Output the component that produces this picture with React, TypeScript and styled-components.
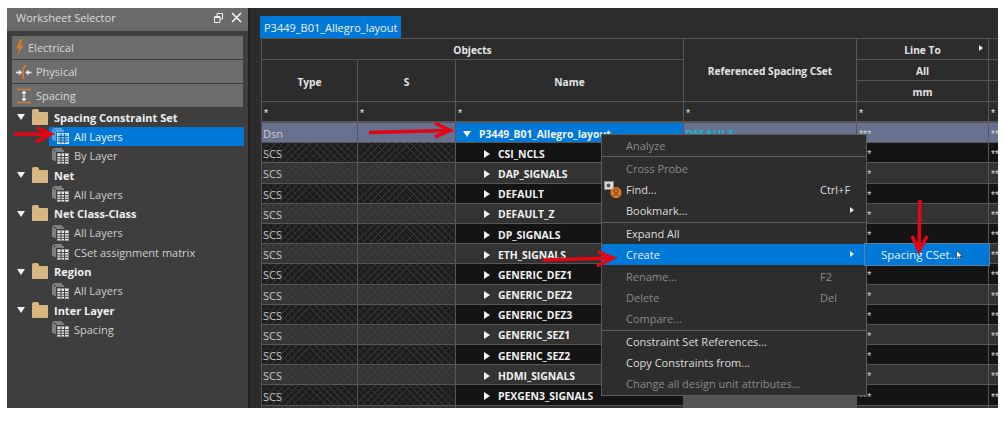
import React from 'react';
import styled, { createGlobalStyle, css } from 'styled-components';

const Global = createGlobalStyle`
    html, body { margin: 0; padding: 0; background: #fff; }
    #root { width: 1004px; height: 424px; overflow: hidden; }
`;

const FONT = '"Open Sans", "Noto Sans", "Liberation Sans", sans-serif';

const Page = styled.div`
    position: relative;
    width: 1004px;
    height: 424px;
    box-sizing: border-box;
    padding: 8px 6px 16px 7px;
    background: #fff;
    display: flex;
    font-family: ${FONT};
    font-size: 11px;
    color: #e6e6e6;
`;

/* sidebar */
const Sidebar = styled.aside`
    width: 243px;
    box-sizing: border-box;
    flex: none;
    display: flex;
    flex-direction: column;
    background: #3e3e3e;
    border-right: 2px solid #222;
`;
const TitleBar = styled.div`
    height: 23px;
    flex: none;
    background: #6a6a6a;
    display: flex;
    align-items: center;
    padding: 0 6px 0 9px;
    color: #dcdcdc;
    font-size: 11px;
    gap: 8px;
    border-bottom: 1px solid #3a3a3a;
`;
const TitleText = styled.span`
    flex: 1;
    margin-top: -5px;
`;
const TitleButton = styled.span`
    display: flex;
    margin-top: -4px;
    color: #f0f0f0;
`;
const Accordion = styled.div`
    display: flex;
    flex-direction: column;
    gap: 1px;
    padding: 4px 5px 0 5px;
`;
const AccordionButton = styled.div`
    height: 23px;
    background: #6c6c6c;
    display: flex;
    align-items: center;
    gap: 4px;
    padding-left: 4px;
    color: #d8d8d8;
    font-size: 11px;
`;
const Tree = styled.div`
    flex: 1;
    padding: 0.5px 4px 0 5px;
    display: flex;
    flex-direction: column;
    background: #3e3e3e;
`;
const GroupRow = styled.div`
    height: 19.3px;
    display: flex;
    align-items: center;
    font-weight: 700;
    font-size: 11px;
    color: #f0f0f0;
    padding-left: 5px;
`;
const DownTriangle = styled.span`
    width: 0;
    height: 0;
    flex: none;
    border-left: 4.5px solid transparent;
    border-right: 4.5px solid transparent;
    border-top: 6px solid #f2f2f2;
    margin-right: 7px;
`;
const Folder = styled.span`
    position: relative;
    width: 16px;
    height: 13px;
    flex: none;
    margin: 2px 6px 0 0;
    border-radius: 1px;
    background: #d9b680;
    &::before {
        content: '';
        position: absolute;
        left: 0;
        top: -3px;
        width: 7px;
        height: 3px;
        border-radius: 2px 2px 0 0;
        background: #d9b680;
    }
`;
const LeafRow = styled.div<{ $selected?: boolean }>`
    height: 19.3px;
    margin-left: 37px;
    display: flex;
    align-items: center;
    gap: 5px;
    padding-left: 3px;
    color: #cfcfcf;
    font-size: 11px;
    ${p => p.$selected && css`
        background: #0078d7;
        color: #f4f4f4;
    `}
`;

/* main area */
const Main = styled.main`
    flex: 1;
    min-width: 0;
    background: #2c2c2c;
    padding: 8px 0 0 10px;
    overflow: hidden;
    display: flex;
    flex-direction: column;
`;
const Tab = styled.div`
    align-self: flex-start;
    height: 22px;
    box-sizing: border-box;
    padding: 0 4px;
    line-height: 23px;
    background: #0078d7;
    color: #f0f0f0;
    font-size: 11px;
`;
const Grid = styled.div`
    display: grid;
    grid-template-columns: 96px 98px 228px 173px 132px 20px;
    grid-template-rows: 21px 21px 21px 21px;
    grid-auto-rows: 20.2px;
    margin-left: 1px;
    border-top: 1px solid #565656;
    border-left: 1px solid #565656;
    width: 760px;
`;
const Cell = styled.div`
    box-sizing: border-box;
    border-right: 1px solid #565656;
    border-bottom: 1px solid #565656;
    display: flex;
    align-items: center;
    white-space: nowrap;
    overflow: hidden;
    padding: 2px 0 0 1px;
    color: #c8c8c8;
    font-size: 11px;
`;
const HeadCell = styled(Cell)<{ $col: string; $row: string }>`
    grid-column: ${p => p.$col};
    grid-row: ${p => p.$row};
    justify-content: center;
    font-weight: 700;
    color: #e4e4e4;
    font-size: 10.2px;
    padding: 2px 0 0;
    position: relative;
`;
const FilterCell = styled(Cell)`
    color: #e8e8e8;
    font-family: "Liberation Sans", sans-serif;
    font-size: 10.5px;
    border-bottom-width: 2px;
    padding: 3px 0 0 2px;
`;
const hatch = (base: string, line: string) => css`
    background-color: ${base};
    background-image:
        repeating-linear-gradient(45deg, ${line} 0 1px, transparent 1px 5px),
        repeating-linear-gradient(-45deg, ${line} 0 1px, transparent 1px 5px);
`;
const TypeCell = styled(Cell)<{ $dark: boolean; $current: boolean }>`
    ${p => p.$current
        ? css`background: #68708f;`
        : p.$dark ? hatch('#1c1c1c', '#303030') : hatch('#333333', '#3b3b3b')}
`;
const NameCell = styled(Cell)<{ $dark: boolean; $current: boolean }>`
    background: ${p => (p.$current ? '#0078d7' : p.$dark ? '#141414' : '#333333')};
    font-weight: 700;
    font-size: 10.4px;
    color: #f2f2f2;
    padding-left: ${p => (p.$current ? '7px' : '28px')};
    gap: 8px;
`;
const RefCell = styled(Cell)<{ $current: boolean }>`
    background: ${p => (p.$current ? '#68708f' : '#555555')};
    color: #16b4d4;
    font-weight: 700;
`;
const ValueCell = styled(Cell)<{ $dark: boolean; $current: boolean }>`
    background: ${p => (p.$current ? '#68708f' : p.$dark ? '#141414' : '#333333')};
    color: #d0d0d0;
    font-family: "Liberation Sans", sans-serif;
    font-size: 10.5px;
    padding: 3px 0 0 2px;
`;
const RightTriangle = styled.span`
    width: 0;
    height: 0;
    flex: none;
    border-top: 4.5px solid transparent;
    border-bottom: 4.5px solid transparent;
    border-left: 6px solid #f2f2f2;
`;
const RowDown = styled(DownTriangle)`
    margin-right: 0;
`;
const HeadArrow = styled.span`
    position: absolute;
    right: 5px;
    top: 6px;
    width: 0;
    height: 0;
    border-top: 3px solid transparent;
    border-bottom: 3px solid transparent;
    border-left: 4px solid #e8e8e8;
`;

/* context menu */
const Menu = styled.div`
    position: absolute;
    left: 601px;
    top: 134px;
    width: 266px;
    box-sizing: border-box;
    background: #2d2d2d;
    border: 1px solid #5c5c5c;
    font-size: 11px;
`;
const MenuItem = styled.div<{ $disabled?: boolean; $active?: boolean }>`
    position: relative;
    height: 21.4px;
    display: flex;
    align-items: center;
    padding-left: 24px;
    color: ${p => (p.$disabled ? '#8a8a8a' : '#dedede')};
    ${p => p.$active && css`background: #0078d7; color: #e8f2fb;`}
`;
const MenuSep = styled.div`
    height: 1px;
    background: #5c5c5c;
`;
const Shortcut = styled.span`
    position: absolute;
    left: 218px;
`;
const MenuArrow = styled.span`
    position: absolute;
    right: 12px;
    top: 7px;
    width: 0;
    height: 0;
    border-top: 3.5px solid transparent;
    border-bottom: 3.5px solid transparent;
    border-left: 4px solid #e8e8e8;
`;
const Submenu = styled.div`
    position: absolute;
    left: 262px;
    top: -1px;
    width: 126px;
    height: 23px;
    box-sizing: border-box;
    background: #0078d7;
    border: 1px solid #5c7f9f;
    display: flex;
    align-items: center;
    padding-left: 16px;
    font-size: 11.5px;
    color: #e8f2fb;
`;
const FindIcon = styled.svg`
    position: absolute;
    left: 2px;
    top: 2px;
`;
const Cursor = styled.svg`
    position: absolute;
    left: 91px;
    top: 6px;
`;
const Arrow = styled.svg`
    position: absolute;
    left: 0;
    top: 0;
    pointer-events: none;
`;

const SheetIcon = ({ selected }: { selected?: boolean }) => (
    <svg width="17" height="16" viewBox="0 0 17 16">
        <path
            d="M1 12V2.5Q1 1 2.5 1H10M3 13V4.5Q3 3 4.5 3H12"
            fill="none"
            stroke={selected ? '#a9d2f3' : '#c4c4c4'}
            strokeWidth="1"
        />
        <rect x="5.5" y="5.5" width="11" height="10" fill={selected ? '#8cc4f0' : '#e8e8e8'} stroke={selected ? '#d6ebfb' : '#9a9a9a'} />
        <path
            d="M5.5 8.5H16.5M5.5 11H16.5M5.5 13.3H16.5M9 5.5V15.5M12.5 5.5V15.5"
            stroke={selected ? '#1668ad' : '#444'}
            strokeWidth="1"
        />
    </svg>
);

const BoltIcon = () => (
    <svg width="8" height="18" viewBox="0 0 8 18">
        <path d="M4.5 0L0 9.5H3.5L1 17L7.5 6.5H4.5L6.5 0Z" fill="#d97a28" />
    </svg>
);
const PhysicalIcon = () => (
    <svg width="16" height="16" viewBox="0 0 16 16">
        <path d="M0 8.5H4.5M3 6.5L5 8.5L3 10.5M15.5 8.5H10.5M12.5 6.5L10.5 8.5L12.5 10.5" stroke="#eee" strokeWidth="1.4" fill="none" />
        <path d="M7 15V7Q7 2 10.5 2" stroke="#d97a28" strokeWidth="1.8" fill="none" />
    </svg>
);
const SpacingIcon = () => (
    <svg width="16" height="16" viewBox="0 0 16 16">
        <path d="M1 1.5H15M1 14.5H15" stroke="#d97a28" strokeWidth="1.4" />
        <path d="M8 3.5V12.5M6 5.5L8 3.5L10 5.5M6 10.5L8 12.5L10 10.5" stroke="#eee" strokeWidth="1.3" fill="none" />
    </svg>
);

const treeData: { group: string; leaves: string[] }[] = [
    { group: 'Spacing Constraint Set', leaves: ['All Layers', 'By Layer'] },
    { group: 'Net', leaves: ['All Layers'] },
    { group: 'Net Class-Class', leaves: ['All Layers', 'CSet assignment matrix'] },
    { group: 'Region', leaves: ['All Layers'] },
    { group: 'Inter Layer', leaves: ['Spacing'] },
];

const rowNames = [
    'CSI_NCLS', 'DAP_SIGNALS', 'DEFAULT', 'DEFAULT_Z', 'DP_SIGNALS', 'ETH_SIGNALS',
    'GENERIC_DEZ1', 'GENERIC_DEZ2', 'GENERIC_DEZ3', 'GENERIC_SEZ1', 'GENERIC_SEZ2',
    'HDMI_SIGNALS', 'PEXGEN3_SIGNALS', '',
];

const App = () => {
    return (
        <Page>
            <Global />
            <Sidebar>
                <TitleBar>
                    <TitleText>Worksheet Selector</TitleText>
                    <TitleButton>
                        <svg width="9" height="10" viewBox="0 0 9 10">
                            <path d="M3 3V.5H8.5V6H6M.5 3.5H6V9.5H.5ZM.5 4.5H6" fill="none" stroke="#f0f0f0" />
                        </svg>
                    </TitleButton>
                    <TitleButton>
                        <svg width="11" height="11" viewBox="0 0 11 11">
                            <path d="M1 1L10 10M10 1L1 10" stroke="#f4f4f4" strokeWidth="1.6" />
                        </svg>
                    </TitleButton>
                </TitleBar>
                <Accordion>
                    <AccordionButton><BoltIcon />Electrical</AccordionButton>
                    <AccordionButton><PhysicalIcon />Physical</AccordionButton>
                    <AccordionButton><SpacingIcon />Spacing</AccordionButton>
                </Accordion>
                <Tree>
                    {treeData.map((g, gi) => (
                        <React.Fragment key={gi}>
                            <GroupRow>
                                <DownTriangle />
                                <Folder />
                                {g.group}
                            </GroupRow>
                            {g.leaves.map((leaf, li) => (
                                <LeafRow key={li} $selected={gi === 0 && li === 0}>
                                    <SheetIcon selected={gi === 0 && li === 0} />
                                    {leaf}
                                </LeafRow>
                            ))}
                        </React.Fragment>
                    ))}
                </Tree>
            </Sidebar>

            <Main>
                <Tab>P3449_B01_Allegro_layout</Tab>
                <Grid>
                    <HeadCell $col="1 / 4" $row="1">Objects</HeadCell>
                    <HeadCell $col="1" $row="2 / 4">Type</HeadCell>
                    <HeadCell $col="2" $row="2 / 4">S</HeadCell>
                    <HeadCell $col="3" $row="2 / 4">Name</HeadCell>
                    <HeadCell $col="4" $row="1 / 4">Referenced Spacing CSet</HeadCell>
                    <HeadCell $col="5" $row="1">Line To<HeadArrow /></HeadCell>
                    <HeadCell $col="5" $row="2">All</HeadCell>
                    <HeadCell $col="5" $row="3">mm</HeadCell>
                    <HeadCell $col="6" $row="1" />
                    <HeadCell $col="6" $row="2" />
                    <HeadCell $col="6" $row="3" />
                    {['*', '*', '*', '*', '*', '*'].map((s, i) => (
                        <FilterCell key={i}>{s}</FilterCell>
                    ))}

                    <TypeCell $dark={false} $current>Dsn</TypeCell>
                    <TypeCell $dark={false} $current />
                    <NameCell $dark={false} $current><RowDown />P3449_B01_Allegro_layout</NameCell>
                    <RefCell $current>DEFAULT</RefCell>
                    <ValueCell $dark={false} $current>***</ValueCell>
                    <ValueCell $dark={false} $current>***</ValueCell>

                    {rowNames.map((name, i) => {
                        const dark = i % 2 === 0;
                        return (
                            <React.Fragment key={i}>
                                <TypeCell $dark={dark} $current={false}>{name && 'SCS'}</TypeCell>
                                <TypeCell $dark={dark} $current={false} />
                                <NameCell $dark={dark} $current={false}>
                                    {name && <RightTriangle />}
                                    {name}
                                </NameCell>
                                <RefCell $current={false} />
                                <ValueCell $dark={dark} $current={false}>***</ValueCell>
                                <ValueCell $dark={dark} $current={false}>***</ValueCell>
                            </React.Fragment>
                        );
                    })}
                </Grid>
            </Main>

            <Menu>
                <MenuItem $disabled>Analyze</MenuItem>
                <MenuSep />
                <MenuItem $disabled>Cross Probe</MenuItem>
                <MenuItem>
                    <FindIcon width="18" height="18" viewBox="0 0 18 18">
                        <rect x="0.5" y="0.5" width="9" height="8" fill="#ddd" stroke="#888" />
                        <circle cx="4.5" cy="4.5" r="2" fill="#555" />
                        <circle cx="12" cy="11.5" r="5.5" fill="#d97a28" />
                        <circle cx="12" cy="10" r="2" fill="none" stroke="#7a3f10" strokeWidth="1" />
                        <path d="M9 15Q12 11.5 15 15" fill="none" stroke="#7a3f10" strokeWidth="1" />
                    </FindIcon>
                    Find...
                    <Shortcut>Ctrl+F</Shortcut>
                </MenuItem>
                <MenuItem>Bookmark...<MenuArrow /></MenuItem>
                <MenuSep />
                <MenuItem>Expand All</MenuItem>
                <MenuItem $active>
                    Create
                    <MenuArrow />
                    <Submenu>
                        Spacing CSet...
                        <Cursor width="7" height="10" viewBox="0 0 7 10">
                            <path d="M0.5 0.5V8L2.4 6.4L3.7 9.4L5 8.8L3.7 6H6.3Z" fill="#fff" stroke="#222" strokeWidth="0.6" />
                        </Cursor>
                    </Submenu>
                </MenuItem>
                <MenuItem $disabled>Rename...<Shortcut>F2</Shortcut></MenuItem>
                <MenuItem $disabled>Delete<Shortcut>Del</Shortcut></MenuItem>
                <MenuItem $disabled>Compare...</MenuItem>
                <MenuSep />
                <MenuItem>Constraint Set References...</MenuItem>
                <MenuItem>Copy Constraints from...</MenuItem>
                <MenuItem $disabled>Change all design unit attributes...</MenuItem>
            </Menu>

            <Arrow width="1004" height="424" viewBox="0 0 1004 424">
                <g fill="none" stroke="#e30613" strokeWidth="3.6" strokeLinejoin="miter">
                    <path d="M14 134L50 134.5" />
                    <path d="M37 128L51 134L36 142" />
                    <path d="M369 132.5L449 130.5" />
                    <path d="M435 123L450 130.5L435 137" />
                    <path d="M543 260L612 258" />
                    <path d="M598 252L613 258L597 266" />
                    <path d="M920 200L919 250" />
                    <path d="M912 236L919 251L927 236" />
                </g>
            </Arrow>
        </Page>
    );
};

export default App;
